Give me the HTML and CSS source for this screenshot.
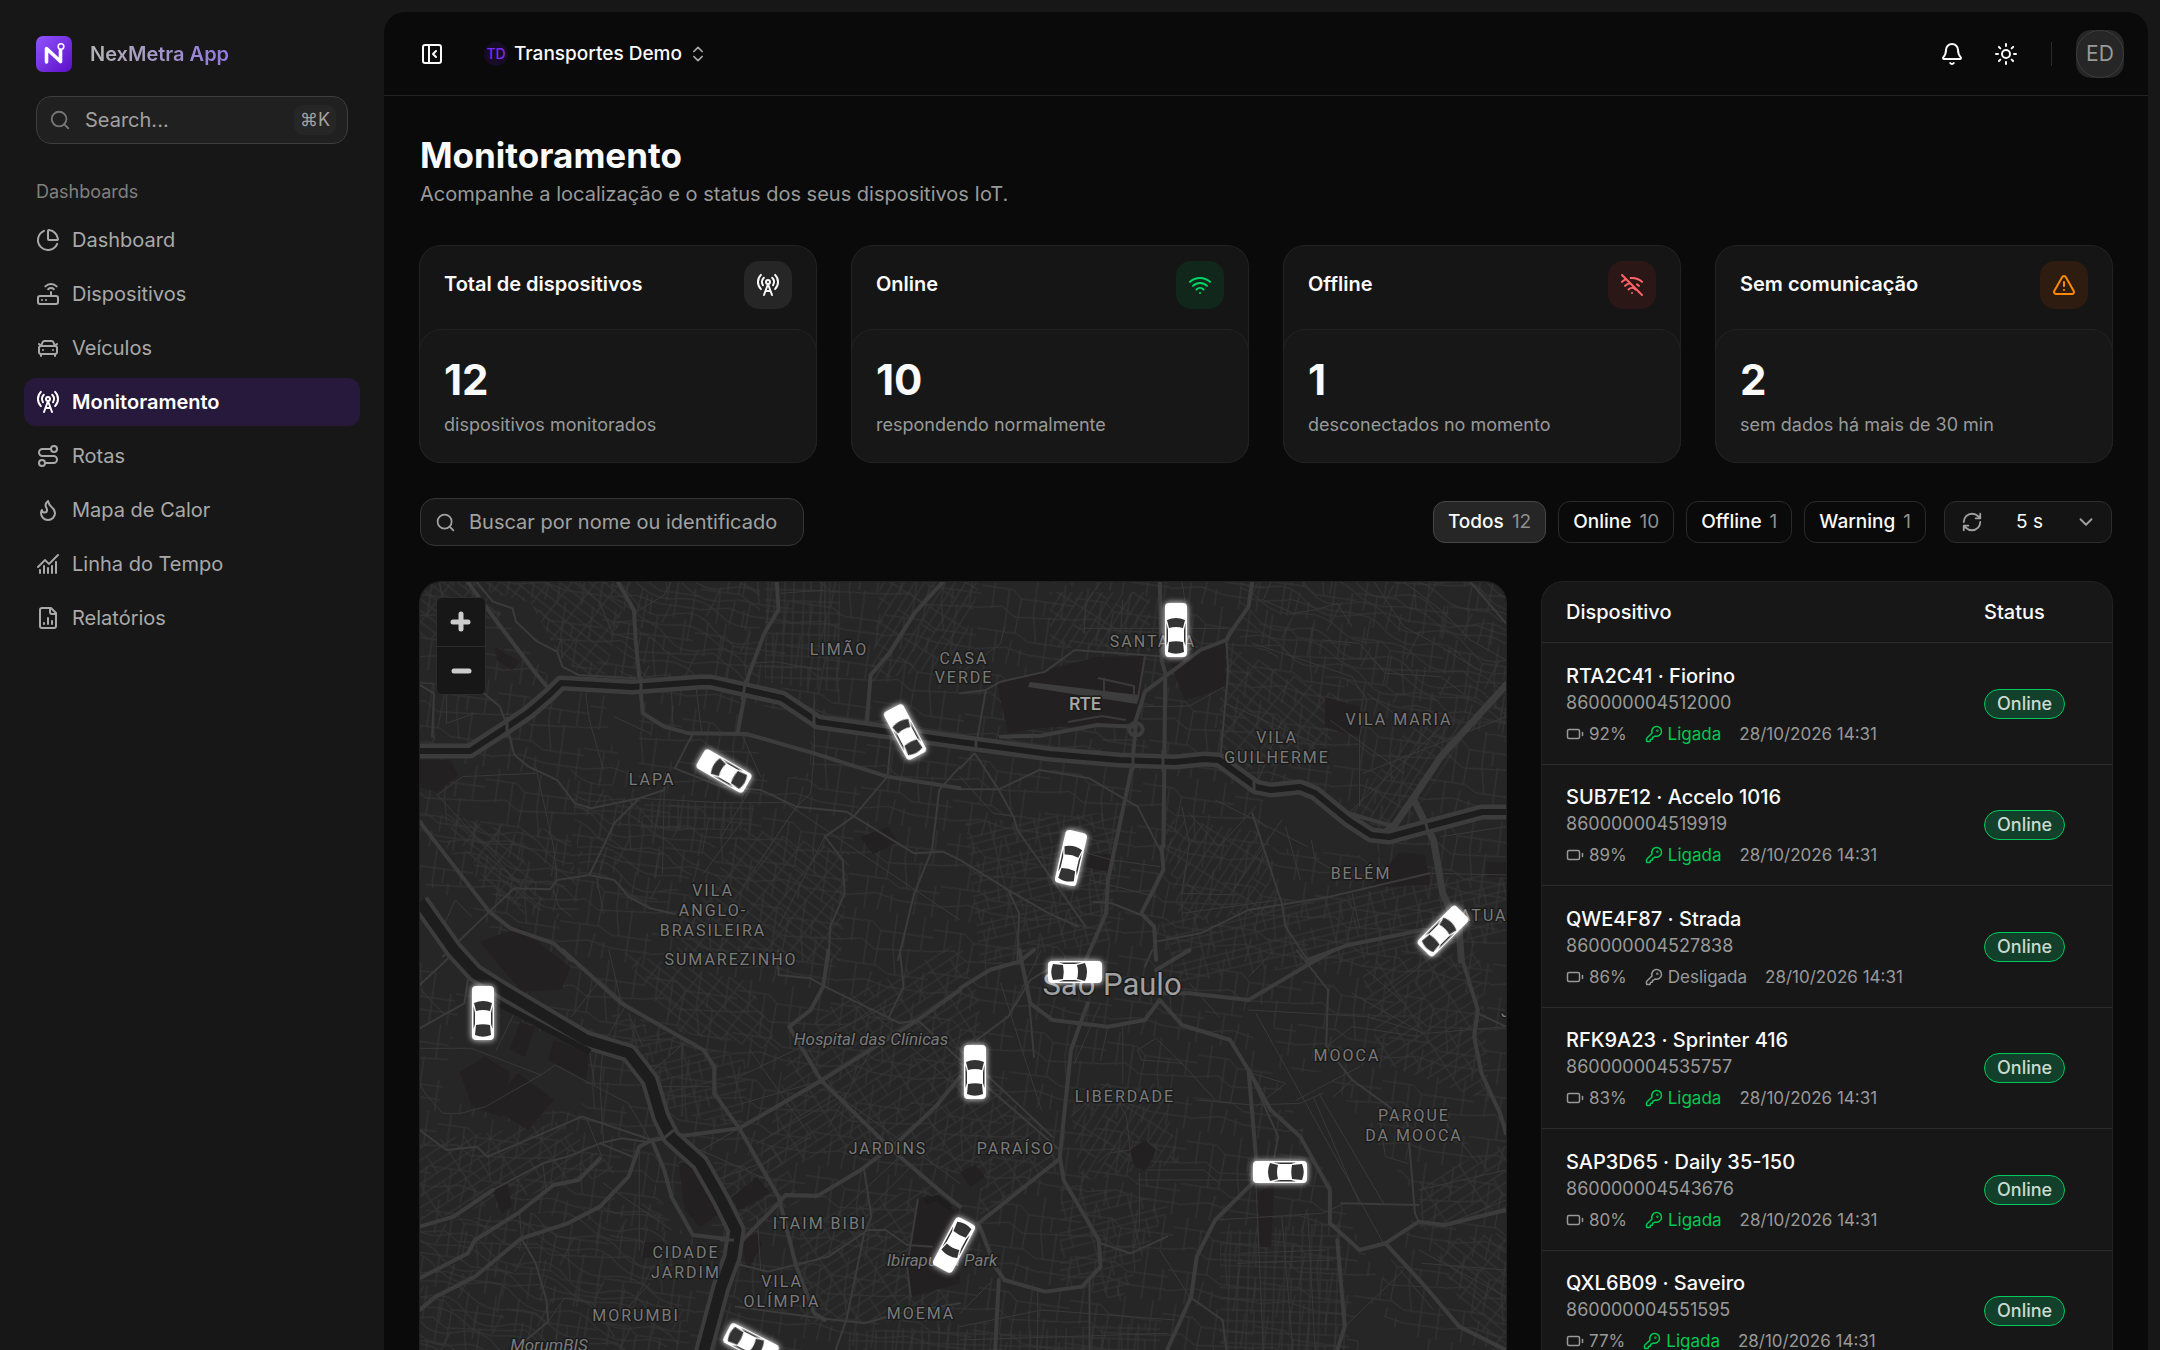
FILE: index.html
```
<!DOCTYPE html>
<html lang="pt-BR">
<head>
<meta charset="utf-8">
<meta name="viewport" content="width=device-width, initial-scale=1">
<title>Monitoramento · NexMetra App</title>
<link rel="stylesheet" href="styles.css">
</head>
<body>
<svg class="sprite" aria-hidden="true">
  <symbol id="i-search" viewBox="0 0 24 24"><circle cx="11" cy="11" r="8"/><path d="m21 21-4.3-4.3"/></symbol>
  <symbol id="i-pie" viewBox="0 0 24 24"><path d="M21 12c.55 0 1-.45.95-1a10 10 0 0 0-8.95-8.95c-.55-.05-1 .4-1 .95v8a1 1 0 0 0 1 1z"/><path d="M21.2 15.9A10 10 0 1 1 8 2.83"/></symbol>
  <symbol id="i-router" viewBox="0 0 24 24"><rect x="2" y="14" width="20" height="8" rx="2"/><path d="M6.01 18H6M10.01 18H10M15 10v4M17.84 7.17a4 4 0 0 0-5.66 0M20.66 4.34a8 8 0 0 0-11.31 0"/></symbol>
  <symbol id="i-car" viewBox="0 0 24 24"><path d="m21 8-2 2-1.5-3.7A2 2 0 0 0 15.65 5H8.4a2 2 0 0 0-1.9 1.26L5 10 3 8M7 14h.01M17 14h.01"/><rect x="3" y="10" width="18" height="8" rx="2"/><path d="M5 18v2M19 18v2"/></symbol>
  <symbol id="i-tower" viewBox="0 0 24 24"><path d="M4.9 16.1C1 12.2 1 5.8 4.9 1.9M7.8 4.7a6.14 6.14 0 0 0-.8 7.5"/><circle cx="12" cy="9" r="2"/><path d="M16.2 4.8c2 2 2.26 5.11.8 7.47M19.1 1.9a9.96 9.96 0 0 1 0 14.1M9.5 18h5M8 22l4-11 4 11"/></symbol>
  <symbol id="i-route" viewBox="0 0 24 24"><circle cx="6" cy="19" r="3"/><path d="M9 19h8.5a3.5 3.5 0 0 0 0-7h-11a3.5 3.5 0 0 1 0-7H15"/><circle cx="18" cy="5" r="3"/></symbol>
  <symbol id="i-flame" viewBox="0 0 24 24"><path d="M8.5 14.5A2.5 2.5 0 0 0 11 12c0-1.38-.5-2-1-3-1.07-2.14-.22-4.05 2-6 .5 2.5 2 4.9 4 6.5s3 3.5 3 5.5a7 7 0 1 1-14 0c0-1.15.43-2.29 1-3a2.5 2.5 0 0 0 2.5 2.5z"/></symbol>
  <symbol id="i-chart" viewBox="0 0 24 24"><path d="M12 16v5M16 14v7M20 10v11M22 3l-8.65 8.65a.5.5 0 0 1-.7 0L9.35 8.35a.5.5 0 0 0-.7 0L2 15M4 18v3M8 14v7"/></symbol>
  <symbol id="i-report" viewBox="0 0 24 24"><path d="M15 2H6a2 2 0 0 0-2 2v16a2 2 0 0 0 2 2h12a2 2 0 0 0 2-2V7z"/><path d="M14 2v4a2 2 0 0 0 2 2h4M8 18v-1M12 18v-6M16 18v-3"/></symbol>
  <symbol id="i-panel" viewBox="0 0 24 24"><rect x="3" y="3" width="18" height="18" rx="2"/><path d="M9 3v18M16 15l-3-3 3-3"/></symbol>
  <symbol id="i-updown" viewBox="0 0 24 24"><path d="m7 15 5 5 5-5M7 9l5-5 5 5"/></symbol>
  <symbol id="i-bell" viewBox="0 0 24 24"><path d="M10.27 21a2 2 0 0 0 3.46 0M3.26 15.33A1 1 0 0 0 4 17h16a1 1 0 0 0 .74-1.67C19.41 13.96 18 12.5 18 8A6 6 0 0 0 6 8c0 4.5-1.41 5.96-2.74 7.33"/></symbol>
  <symbol id="i-sun" viewBox="0 0 24 24"><circle cx="12" cy="12" r="4"/><path d="M12 2v2M12 20v2M4.93 4.93l1.41 1.41M17.66 17.66l1.41 1.41M2 12h2M20 12h2M6.34 17.66l-1.41 1.41M19.07 4.93l-1.41 1.41"/></symbol>
  <symbol id="i-wifi" viewBox="0 0 24 24"><path d="M12 20h.01M2 8.82a15 15 0 0 1 20 0M5 12.86a10 10 0 0 1 14 0M8.5 16.43a5 5 0 0 1 7 0"/></symbol>
  <symbol id="i-wifi-off" viewBox="0 0 24 24"><path d="M12 20h.01M8.5 16.43a5 5 0 0 1 7 0M5 12.86a10 10 0 0 1 5.17-2.69M19 12.86a10 10 0 0 0-2-1.52M2 8.82a15 15 0 0 1 4.18-2.64M22 8.82a15 15 0 0 0-11.29-3.76M2 2l20 20"/></symbol>
  <symbol id="i-warn" viewBox="0 0 24 24"><path d="m21.73 18-8-14a2 2 0 0 0-3.48 0l-8 14A2 2 0 0 0 4 21h16a2 2 0 0 0 1.73-3M12 9v4M12 17h.01"/></symbol>
  <symbol id="i-refresh" viewBox="0 0 24 24"><path d="M3 12a9 9 0 0 1 9-9 9.75 9.75 0 0 1 6.74 2.74L21 8M21 3v5h-5M21 12a9 9 0 0 1-9 9 9.75 9.75 0 0 1-6.74-2.74L3 16M8 16H3v5"/></symbol>
  <symbol id="i-down" viewBox="0 0 24 24"><path d="m6 9 6 6 6-6"/></symbol>
  <symbol id="i-battery" viewBox="0 0 24 24"><path d="M22 14v-4"/><rect x="2" y="6" width="16" height="12" rx="2"/></symbol>
  <symbol id="i-key" viewBox="0 0 24 24"><path d="M2.59 17.41A2 2 0 0 0 2 18.83V21a1 1 0 0 0 1 1h3a1 1 0 0 0 1-1v-1a1 1 0 0 1 1-1h1a1 1 0 0 0 1-1v-1a1 1 0 0 1 1-1h.17a2 2 0 0 0 1.42-.59l.81-.81a6.5 6.5 0 1 0-4-4z"/><circle cx="16.5" cy="7.5" r=".6"/></symbol>
  <symbol id="vehicle" viewBox="-16 -32 32 64" overflow="visible">
    <rect class="v-body" x="-11" y="-27" width="22" height="54" rx="4"/>
    <path class="v-glass" d="M-9-10Q0-14 9-10L7-2Q0-4-7-2ZM-7 12Q0 10.500 7 12L8 22Q0 25.500-8 22ZM-9.500-7l1.500 7v11l-1.500 5ZM9.500-7L8 0v11l1.500 5Z"/>
  </symbol>
</svg>

<div class="shell">
  <aside class="sidebar">
    <a class="brand" href="#">
      <svg class="brand-mark" viewBox="0 0 36 36" aria-hidden="true">
        <defs><linearGradient id="brandfill" x1="0" y1="0" x2="1" y2="1"><stop offset="0" stop-color="#9155ff"/><stop offset="1" stop-color="#5b0ec4"/></linearGradient></defs>
        <rect width="36" height="36" rx="7" fill="url(#brandfill)"/>
        <path d="M10.500 26V12.500L24.500 25.500V14" fill="none" stroke="#fff" stroke-width="3.600" stroke-linecap="round" stroke-linejoin="round"/>
        <circle cx="25" cy="10.500" r="2.800" fill="#7426e0" stroke="#fff" stroke-width="1.600"/>
      </svg>
      <span class="brand-name">NexMetra App</span>
    </a>
    <label class="quick-search">
      <svg class="icon"><use href="#i-search"/></svg>
      <input type="text" placeholder="Search..." aria-label="Search">
      <kbd>⌘K</kbd>
    </label>
    <p class="nav-title">Dashboards</p>
    <nav class="nav">
      <a href="#"><svg class="icon"><use href="#i-pie"/></svg>Dashboard</a>
      <a href="#"><svg class="icon"><use href="#i-router"/></svg>Dispositivos</a>
      <a href="#"><svg class="icon"><use href="#i-car"/></svg>Veículos</a>
      <a href="#" class="active" aria-current="page"><svg class="icon"><use href="#i-tower"/></svg>Monitoramento</a>
      <a href="#"><svg class="icon"><use href="#i-route"/></svg>Rotas</a>
      <a href="#"><svg class="icon"><use href="#i-flame"/></svg>Mapa de Calor</a>
      <a href="#"><svg class="icon"><use href="#i-chart"/></svg>Linha do Tempo</a>
      <a href="#"><svg class="icon"><use href="#i-report"/></svg>Relatórios</a>
    </nav>
  </aside>

  <div class="inset">
    <header class="topbar">
      <button class="icon-btn" type="button" aria-label="Recolher menu"><svg class="icon"><use href="#i-panel"/></svg></button>
      <button class="tenant" type="button">
        <span class="tenant-badge">TD</span>
        <span>Transportes Demo</span>
        <svg class="icon"><use href="#i-updown"/></svg>
      </button>
      <div class="topbar-actions">
        <button class="icon-btn" type="button" aria-label="Notificações"><svg class="icon"><use href="#i-bell"/></svg></button>
        <button class="icon-btn" type="button" aria-label="Tema"><svg class="icon"><use href="#i-sun"/></svg></button>
        <span class="divider"></span>
        <button class="avatar" type="button"><span>ED</span></button>
      </div>
    </header>

    <main class="content">
      <div class="heading">
        <h1>Monitoramento</h1>
        <p>Acompanhe a localização e o status dos seus dispositivos IoT.</p>
      </div>

      <section class="stats">
        <article class="stat">
          <div class="stat-head"><h2>Total de dispositivos</h2><span class="stat-icon"><svg class="icon"><use href="#i-tower"/></svg></span></div>
          <div class="stat-body"><strong>12</strong><p>dispositivos monitorados</p></div>
        </article>
        <article class="stat">
          <div class="stat-head"><h2>Online</h2><span class="stat-icon green"><svg class="icon"><use href="#i-wifi"/></svg></span></div>
          <div class="stat-body"><strong>10</strong><p>respondendo normalmente</p></div>
        </article>
        <article class="stat">
          <div class="stat-head"><h2>Offline</h2><span class="stat-icon red"><svg class="icon"><use href="#i-wifi-off"/></svg></span></div>
          <div class="stat-body"><strong>1</strong><p>desconectados no momento</p></div>
        </article>
        <article class="stat">
          <div class="stat-head"><h2>Sem comunicação</h2><span class="stat-icon orange"><svg class="icon"><use href="#i-warn"/></svg></span></div>
          <div class="stat-body"><strong>2</strong><p>sem dados há mais de 30 min</p></div>
        </article>
      </section>

      <div class="toolbar">
        <label class="search">
          <svg class="icon"><use href="#i-search"/></svg>
          <input type="text" placeholder="Buscar por nome ou identificado" aria-label="Buscar dispositivo">
        </label>
        <div class="filters">
          <button type="button" class="chip selected">Todos <span>12</span></button>
          <button type="button" class="chip">Online <span>10</span></button>
          <button type="button" class="chip">Offline <span>1</span></button>
          <button type="button" class="chip">Warning <span>1</span></button>
          <label class="interval">
            <svg class="icon"><use href="#i-refresh"/></svg>
            <select aria-label="Intervalo de atualização"><option>5 s</option><option>10 s</option><option>30 s</option></select>
            <svg class="icon"><use href="#i-down"/></svg>
          </label>
        </div>
      </div>

      <section class="board">
        <div class="map">
          <svg class="map-canvas" viewBox="0 0 1086 900" preserveAspectRatio="xMinYMin slice" role="img" aria-label="Mapa de São Paulo">
            <defs>
              <pattern id="p0" width="93" height="87" patternUnits="userSpaceOnUse" patternTransform="rotate(8)"><path d="M0 12h31l9 8h53M0 34l22-4 14 9 57-5M0 55h40l12 7h41M0 76l30-6 24 5h39M12 0v34M27 12v43M40 20l-2 35M54 0v34l6 28M70 34v53M82 0v34M20 55v32M36 62l-3 25M88 55v32M64 20v14M46 70v17"/></pattern>
              <pattern id="p1" width="42" height="30" patternUnits="userSpaceOnUse" patternTransform="rotate(-33)"><path d="M0 5h42M0 15h42M0 25h42M8 0v30M29 5v20"/></pattern>
              <pattern id="p2" width="38" height="27" patternUnits="userSpaceOnUse" patternTransform="rotate(38)"><path d="M0 4h38M0 13h38M0 22h38M6 0v27M25 0v27"/></pattern>
              <pattern id="p3" width="36" height="33" patternUnits="userSpaceOnUse" patternTransform="rotate(2)"><path d="M0 6h36M0 17h36M0 28h36M5 0v33M14 0v33M24 0v33M31 6v22"/></pattern>
              <pattern id="p4" width="40" height="26" patternUnits="userSpaceOnUse" patternTransform="rotate(-58)"><path d="M0 4h40M0 12h40M0 21h40M9 0v26M30 4v17"/></pattern>
              <pattern id="p5" width="84" height="66" patternUnits="userSpaceOnUse" patternTransform="rotate(20)"><path d="M0 8q20-12 40 2t44-2M0 20q22-10 42 0t42 0M0 34q18 12 40-2t44 2M0 46q24 10 44-2t40 2M0 58q20-8 40 2t44-2M14 0l5 30M33 34l-4 32M50 0l6 34M66 40l4 26M76 0l-3 22"/></pattern>
              <pattern id="p6" width="44" height="29" patternUnits="userSpaceOnUse" patternTransform="rotate(-14)"><path d="M0 4h44M0 11h44M0 20h44M10 0v29M33 0v20M22 11v18"/></pattern>
            </defs>
            <rect class="land" width="1086" height="900"/>
            <rect class="net" width="1086" height="900" fill="url(#p0)"/>

            <!-- street grids by neighbourhood -->
            <g class="blocks">
              <path fill="url(#p2)" d="M0 0H210L180 110 130 90 90 30 0 60Z"/>
              <path fill="url(#p5)" d="M190 0H340V100L200 95ZM0 230L150 250 160 340 90 330 0 240Z"/>
              <path fill="url(#p3)" d="M345 0H420V110L345 100ZM225 220L335 220 330 248 220 248Z"/>
              <path fill="url(#p4)" d="M460 0H560L540 80 450 100ZM630 10h100v60l-100-5Z"/>
              <path fill="url(#p5)" d="M820 0H1086V160L1000 130 940 110 820 60Z"/>
              <path fill="url(#p2)" d="M800 60L930 120 900 180 800 190Z"/>
              <path fill="url(#p4)" d="M985 150L1060 130 985 245 930 235Z"/>
              <path fill="url(#p2)" d="M325 245L430 270 420 380 250 380 290 300ZM20 230L90 250 130 330 80 320Z"/>
              <path fill="url(#p1)" d="M370 470L560 420 560 600 450 560 340 590ZM400 430L540 360 560 420 380 470Z"/>
              <path fill="url(#p6)" d="M545 240L700 230 690 360 560 380ZM740 340L1086 290 1086 360 760 400Z"/>
              <path fill="url(#p4)" d="M740 235L840 250 860 330 760 340Z"/>
              <path fill="url(#p1)" d="M265 600L360 560 380 620 330 640ZM0 560L140 540 200 590 0 640Z"/>
              <path fill="url(#p5)" d="M0 640L240 620 270 760 0 820ZM150 180L300 260 240 330 160 300Z"/>
              <path fill="url(#p1)" d="M380 640L520 600 530 740 380 740ZM560 480L640 580 560 640Z"/>
              <path fill="url(#p3)" d="M580 750L740 740 740 900 570 900ZM800 650L920 640 930 780 800 780Z"/>
              <path fill="url(#p3)" d="M430 750L570 740 560 900 400 900Z"/>
              <path fill="url(#p4)" d="M650 520L740 500 760 580 660 600Z"/>
              <path fill="url(#p1)" d="M1000 600L1086 560V630L1000 650ZM940 380L1060 370 1070 520 960 480Z"/>
              <path fill="url(#p2)" d="M1010 660L1086 650V780L1040 720ZM200 370L330 400 360 470 260 450Z"/>
              <path fill="url(#p6)" d="M190 430L330 480 320 550 230 520ZM640 600L750 620 700 720 640 700Z"/>
            </g>

            <!-- open areas without streets -->
            <path class="land" d="M65 10L110 20 140 75 170 100 140 110 110 70ZM185 112L220 112 218 200 190 160ZM318 115L390 140 390 190 350 200ZM0 300L60 330 100 400 60 420 0 380ZM40 420L170 470 160 530 20 520ZM860 490L905 490 1000 620 960 700 890 560 820 430 850 420ZM950 720L1086 860V900H1000L930 740ZM840 195L950 240 960 275 850 265ZM235 600L290 640 310 700 280 660 250 640Z"/>

            <!-- parks and closed grounds -->
            <g class="park">
              <path d="M577 101L677 75 723 74 719 141 629 145 588 151ZM750 80L805 60 806 105 765 118ZM666 271l28 2-5 17-24-5ZM905 115l35 10v30l-35-10ZM980 270l25 3 5 30-60 2Z"/>
              <path d="M0 178h30l8 15-20 17-18-5ZM75 65l25 15-8 8-15-10ZM440 255l28-10 10 15-25 12ZM60 360l40-15 30 25 20 15-8 22-40 3Z"/>
              <path d="M70 524L98 491 134 518 108 548ZM134 458L169 471 166 498 128 478ZM40 490l25-15 25 15-8 45-30-10ZM100 440l15 5-10 30-15-8ZM259 581L273 581 300 631 280 645 265 628Z"/>
              <path d="M312 615L337 595 350 611 318 629ZM72 607l15-8 5 25-10 8ZM225 660h20l-5 12-18 5ZM322 655l15-3 5 10-15 28Z"/>
              <path d="M498 618L508 613 535 628 540 701 491 715 487 685ZM838 611L854 601 851 665 840 665ZM710 568L725 558 736 568 725 590 714 583ZM540 590l15-7 10 12-15 10ZM1066 280h20v15h-20Z"/>
            </g>

            <g class="runway"><path d="M610 100L718 113 717 122 608 105Z"/><path d="M678 96l36 8v14M684 96v14M648 140l34-6 24 4"/></g>

            <!-- north-west sheet -->
            <g class="road" transform="matrix(.3571 0 0 .3333 -20 -22)">
              <g class="w2"><path d="M655 160L740 105 760 66M380 620L430 860 440 960M1160 400V580L1150 700 1110 740 960 980M670 715L900 728H1080M740 690L735 940M520 400L530 480 570 630M760 390L765 500M830 390L845 520M60 370H95V540M110 70L120 110M500 66L560 130 595 220 660 240M980 310L1050 305 1180 330M105 705L340 980M105 705L175 650 380 640M550 950L570 1060M430 990L445 1040 480 1070M960 530L1010 650M600 470L700 520M1190 66V250M1065 100L1190 90M440 275L450 240M130 400V490L210 460M850 940L960 780M1040 700L1568 1080M980 690L900 830M1190 830L1060 1100M1110 740L1010 900M125 1090L155 1020 200 1070"/></g>
              <g class="w3"><path d="M215 66L260 125 315 145 325 185 385 245 440 275 455 320 500 345 660 355M235 400L280 440 300 500 320 585 360 620 440 660 490 730 535 745 670 715 740 690M820 520L770 625 900 680 1010 690 1110 740 1250 755 1440 880 1520 875 1568 900M670 715L600 790 560 880 530 945M120 1190L250 1055 320 985 420 988 440 960 530 945 600 960 640 1010 700 1045 770 1062M1375 540L1365 650 1270 770 1190 830 1240 900 1245 1000 1205 1100 1200 1200M1568 620L1510 690 1490 870 1440 1000 1395 1200M740 690L745 640M55 375L95 400 90 530"/></g>
              <g class="w4"><path d="M190 66L240 140 380 340 415 385M610 66L655 150 660 240 680 460 740 500 810 520 970 522 1160 580 1365 650 1568 685M1055 66L1060 150 1020 220 975 350 945 520M1520 66L1440 160 1370 280 1318 345 1308 480M55 785L250 1055 310 1105 430 1150 480 1200"/></g>
            </g>

            <!-- north-east sheet -->
            <g class="road" transform="matrix(.3699 0 0 .3333 540 -22)">
              <g class="w2"><path d="M600 66L620 200M490 440L620 438 715 380M330 205H720M380 66L340 130 335 220M440 120L435 200M790 250L900 290 1060 350M840 66L820 120 900 160 960 150 1020 130 1060 200M1060 350L1100 420 1080 530V740M715 430L760 450 960 550M870 480L800 680M720 580L790 620M0 340L110 250 120 200M385 540H480M268 525V570M1100 400L1330 590M1000 480L1200 640M1040 770L1330 470M1090 640L1476 470M600 740L620 850 600 1000 750 1005M740 990L870 780M690 720L940 860M800 740L700 860 620 760M950 840L960 900 1060 960M880 800L920 960M600 1060L860 1020M1060 1000L1080 1100M1300 830L1476 800M1270 940L1476 945M345 880L410 900 540 920M350 960L530 1010M150 770L90 760 0 650M1120 66L1200 200 1300 260 1400 330M1200 66L1300 150 1380 240 1476 300M980 240L1080 250 1150 340 1300 350 1360 400"/></g>
              <g class="w3"><path d="M0 400L70 390 110 365 230 335 310 270 560 290 640 260M70 390L45 545M720 235L725 330 705 580M0 625L40 580 105 690 145 770 155 810 340 1100M0 688H105L215 630 350 655 480 740 550 890M0 900L130 990 240 1060 320 1100M130 990L160 1060 155 1200M360 1025L410 1030 490 1065M530 1145L650 1120 780 1050 1000 1010 1270 940M790 760L870 1030 880 1100 940 1200M500 290L480 420M1380 66L1476 190"/></g>
              <g class="w4"><path d="M540 66L545 300 555 340 550 860M790 66L780 140 730 220 720 240 650 270 500 395 470 500M110 530L220 527 370 495 475 500 465 620 400 960 395 1060 340 1200M545 860L550 930 490 1060 525 1100 530 1200M940 1200L1050 1155 1250 1110H1300M1050 760L1175 800M475 490A18 18 0 1 0 476 490"/></g>
              <g class="w6"><path d="M1476 375L1300 590 1225 715 1175 795 1140 825M1225 715L1280 840 1305 1000 1350 1110 1355 1200"/></g>
            </g>

            <!-- south-west sheet -->
            <g class="road" transform="matrix(.3571 0 0 .3333 -20 368)">
              <g class="w2"><path d="M630 170L570 280 560 400 570 580M585 0L620 160M640 190L680 290M710 360L800 275M415 1115L460 1045 540 1060 600 1160M55 295H200L395 375 435 345 540 405 640 460 700 570M435 260L530 300 545 405M395 375L240 470 170 490 120 490 70 430 55 400M320 190L270 300M60 120L120 190M520 500L565 620M340 865L335 790M400 640L410 730M670 600V900M780 640L950 535M840 600L1030 690M885 690L1010 640M730 410H870M790 290V500M950 380L1400 150M960 460L1180 392M980 300L1150 560 1090 600M1000 580L1250 430M1180 400L1568 700M1260 130L1568 420M1320 300L1200 530M1400 620L1220 800M1440 640L1310 780M1110 950L1230 900M1000 800L1010 960M700 1000L640 1070M570 700L760 840M640 170L560 90 480 200"/></g>
              <g class="w3"><path d="M55 540L130 600 215 590 245 620 510 500 705 570M260 720L400 640 470 620 560 580 620 565 690 575M1060 0V75L1150 85 1190 110 1400 220 1450 210M1450 210L1568 330M1300 660L1320 800 1300 850 1250 1110 1220 1200M900 930L1030 965 1200 920 1310 840 1360 840 1420 885 1490 890M940 1070L1180 1105 1300 1120 1400 1090 1568 1060M340 865L380 940 410 1050 415 1115 320 1200M55 235L180 160 190 90M55 105L160 0M1400 0L1410 110 1370 200M560 580L650 620M1450 750L1420 950 1430 1040"/></g>
              <g class="w4"><path d="M455 0L620 160 800 270 850 300 880 350V430L950 535 1060 740 1110 950 1160 1090 1190 1110M705 570L950 535 1180 392 1450 210 1568 120M55 830L150 800 260 720M55 985L190 910 210 870 330 790 430 705 500 690 560 625M55 1080L100 1040 210 980 340 865 470 820 560 770 640 680 670 590 705 570 740 660 760 740 820 855 940 870H960L1060 760 1080 735 1170 737 1290 660 1400 570 1500 470 1568 380M1200 0L1185 110 1150 180 1090 230 1180 392 1340 560 1400 620 1520 730 1568 770"/></g>
            </g>

            <!-- south-east sheet -->
            <g class="road" transform="matrix(.3699 0 0 .3333 540 368)">
              <g class="w2"><path d="M800 190L1145 880M970 430L1145 760M955 440L1080 760M780 180L1100 200 1260 250 1476 230M640 450L790 465 920 460 980 430M690 810L980 790 1040 760M800 700L820 1200M0 1090L80 1000M380 160L310 340M220 0L130 200M110 100L220 480M480 300L530 265 600 340 690 450M480 300L490 330 600 340M790 370L880 400 800 470M910 450L1080 350M1010 440L1060 390M505 660H660L700 700M480 690H800M485 670V830L470 890M300 500L400 400 450 500 460 600M370 640L400 610 460 600M0 1170L560 1150M0 1130L220 1080 580 1110M210 1020V1200M540 900L620 1040M750 940L1010 930M760 910L990 900M870 800L900 1200M940 790L960 1200M1040 1130L1200 960M1190 960L1280 1080M1250 940L1476 960M1240 900L1476 1040M1300 830L1476 750M1240 720L1476 660M1130 470L1150 620 1210 640M1300 500L1400 640M1060 130L1250 250M1150 130L1300 0M1100 60L1200 160M620 100L700 200M850 0L780 80M990 290L1060 230 1240 260M380 330L400 230M440 230L440 400"/></g>
              <g class="w3"><path d="M45 270L130 200 190 90 250 50M0 340L270 600M0 300L250 560M910 0L995 120 990 290 1060 390 1160 470 1210 520 1230 790 1240 815M1400 190L1476 230M350 990V1200M1030 760L1240 765M780 360L860 560 850 620M380 880L460 910 560 860M620 1040L710 1110 720 1200M185 130L200 320M500 50L520 0"/></g>
              <g class="w4"><path d="M0 115L80 60 160 35 200 0M500 130H620L780 150 940 45 1010 0M120 990L95 950 50 820 265 630M530 60L620 0"/></g>
              <g class="w5"><path d="M160 0L190 160 250 210 400 230 500 210 540 150 600 225 730 270 780 360 840 480 920 560 1000 720V820L1080 900 1150 880 1240 815 1310 825 1476 780M780 360L800 620 790 700 690 810 640 920 625 1040 560 1200M345 160L300 300 270 620 280 690 375 870 380 950 330 1010 230 1025 120 990M105 990L95 1200M1350 0L1400 180 1390 260 1410 370 1460 490 1476 550M1020 870L1040 1130 1020 1200M1150 880L1250 1000 1350 1130 1476 1200"/></g>
            </g>

            <!-- rivers with the expressways on both banks -->
            <g class="river">
              <path d="M0 169H50L87 145 109 130 130 112 141 101 212 105 280 100H291L362 116 398 140 540 160 629 172 699 178 755 180 784 177 799 178 836 205 851 208 880 205 895 211 928 238 951 253 969 255 1002 246 1062 230H1086"/>
              <path class="wide" d="M0 320L34 368 55 391 87 411 166 458 209 471 230 498 241 535 251 555 280 581 301 618 316 648 312 675 301 705 284 768 270 900"/>
            </g>
            <g class="water">
              <path d="M0 169H50L87 145 109 130 130 112 141 101 212 105 280 100H291L362 116 398 140 540 160 629 172 699 178 755 180 784 177 799 178 836 205 851 208 880 205 895 211 928 238 951 253 969 255 1002 246 1062 230H1086"/>
              <path class="wide" d="M0 320L34 368 55 391 87 411 166 458 209 471 230 498 241 535 251 555 280 581 301 618 316 648 312 675 301 705 284 768 270 900"/>
              <path d="M80 422L170 470M505 620l12-4 14 10"/>
            </g>
            <g class="bridge"><path d="M221 95v16M87 135v20M326 98l-4 20M394 130v16M556 155v14M713 168v20M743 168v22M834 195v14M1005 238l4 16M254 548l-10 8M314 658h-14"/></g>

            <g class="labels">
              <text x="419" y="73">LIMÃO</text>
              <text x="544" y="82">CASA</text><text x="544" y="101">VERDE</text>
              <text x="733" y="65">SANTANA</text>
              <text class="code" x="665" y="128">RTE</text>
              <text x="979" y="143">VILA MARIA</text>
              <text x="857" y="161">VILA</text><text x="857" y="181">GUILHERME</text>
              <text x="232" y="203">LAPA</text>
              <text x="293" y="314">VILA</text><text x="293" y="334">ANGLO-</text><text x="293" y="354">BRASILEIRA</text>
              <text x="311" y="383">SUMAREZINHO</text>
              <text x="941" y="297">BELÉM</text>
              <text class="start" x="1029" y="339">TATUAPÉ</text>
              <text class="start" x="1081" y="435">J</text>
              <text class="city" x="692" y="413">São Paulo</text>
              <text class="poi" x="451" y="463">Hospital das Clínicas</text>
              <text x="468" y="572">JARDINS</text>
              <text x="596" y="572">PARAÍSO</text>
              <text x="705" y="520">LIBERDADE</text>
              <text x="927" y="479">MOOCA</text>
              <text x="994" y="539">PARQUE</text><text x="994" y="559">DA MOOCA</text>
              <text x="400" y="647">ITAIM BIBI</text>
              <text x="266" y="676">CIDADE</text><text x="266" y="696">JARDIM</text>
              <text x="362" y="705">VILA</text><text x="362" y="725">OLÍMPIA</text>
              <text x="216" y="739">MORUMBI</text>
              <text x="501" y="737">MOEMA</text>
              <text class="poi" x="522" y="684">Ibirapuera Park</text>
              <text class="poi" x="129" y="769">MorumBIS</text>
            </g>

            <g class="vehicles">
              <use href="#vehicle" x="-16" y="-32" width="32" height="64" transform="translate(756 48)"/>
              <use href="#vehicle" x="-16" y="-32" width="32" height="64" transform="translate(485 150) rotate(-28)"/>
              <use href="#vehicle" x="-16" y="-32" width="32" height="64" transform="translate(304 189) rotate(-60)"/>
              <use href="#vehicle" x="-16" y="-32" width="32" height="64" transform="translate(651 276) rotate(13)"/>
              <use href="#vehicle" x="-16" y="-32" width="32" height="64" transform="translate(1023 349) rotate(45)"/>
              <use href="#vehicle" x="-16" y="-32" width="32" height="64" transform="translate(655 390) rotate(90)"/>
              <use href="#vehicle" x="-16" y="-32" width="32" height="64" transform="translate(555 490)"/>
              <use href="#vehicle" x="-16" y="-32" width="32" height="64" transform="translate(63 431)"/>
              <use href="#vehicle" x="-16" y="-32" width="32" height="64" transform="translate(860 590) rotate(-90)"/>
              <use href="#vehicle" x="-16" y="-32" width="32" height="64" transform="translate(534 663) rotate(208)"/>
              <use href="#vehicle" x="-16" y="-32" width="32" height="64" transform="translate(331 762) rotate(117)"/>
            </g>
          </svg>
          <div class="zoom">
            <button type="button" aria-label="Aproximar"><svg viewBox="0 0 48 48"><path d="M16 24h15M24 16v15"/></svg></button>
            <button type="button" aria-label="Afastar"><svg viewBox="0 0 48 48"><path d="M17 24h15"/></svg></button>
          </div>
        </div>

        <div class="devices">
          <table>
            <thead><tr><th scope="col">Dispositivo</th><th scope="col" class="status-col">Status</th></tr></thead>
            <tbody>
              <tr>
                <td><div class="name">RTA2C41 · Fiorino</div><div class="serial">860000004512000</div>
                  <div class="meta"><span><svg class="icon"><use href="#i-battery"/></svg>92%</span><span class="on"><svg class="icon"><use href="#i-key"/></svg>Ligada</span><time>28/10/2026 14:31</time></div></td>
                <td><span class="badge">Online</span></td>
              </tr>
              <tr>
                <td><div class="name">SUB7E12 · Accelo 1016</div><div class="serial">860000004519919</div>
                  <div class="meta"><span><svg class="icon"><use href="#i-battery"/></svg>89%</span><span class="on"><svg class="icon"><use href="#i-key"/></svg>Ligada</span><time>28/10/2026 14:31</time></div></td>
                <td><span class="badge">Online</span></td>
              </tr>
              <tr>
                <td><div class="name">QWE4F87 · Strada</div><div class="serial">860000004527838</div>
                  <div class="meta"><span><svg class="icon"><use href="#i-battery"/></svg>86%</span><span><svg class="icon"><use href="#i-key"/></svg>Desligada</span><time>28/10/2026 14:31</time></div></td>
                <td><span class="badge">Online</span></td>
              </tr>
              <tr>
                <td><div class="name">RFK9A23 · Sprinter 416</div><div class="serial">860000004535757</div>
                  <div class="meta"><span><svg class="icon"><use href="#i-battery"/></svg>83%</span><span class="on"><svg class="icon"><use href="#i-key"/></svg>Ligada</span><time>28/10/2026 14:31</time></div></td>
                <td><span class="badge">Online</span></td>
              </tr>
              <tr>
                <td><div class="name">SAP3D65 · Daily 35-150</div><div class="serial">860000004543676</div>
                  <div class="meta"><span><svg class="icon"><use href="#i-battery"/></svg>80%</span><span class="on"><svg class="icon"><use href="#i-key"/></svg>Ligada</span><time>28/10/2026 14:31</time></div></td>
                <td><span class="badge">Online</span></td>
              </tr>
              <tr>
                <td><div class="name">QXL6B09 · Saveiro</div><div class="serial">860000004551595</div>
                  <div class="meta"><span><svg class="icon"><use href="#i-battery"/></svg>77%</span><span class="on"><svg class="icon"><use href="#i-key"/></svg>Ligada</span><time>28/10/2026 14:31</time></div></td>
                <td><span class="badge">Online</span></td>
              </tr>
            </tbody>
          </table>
        </div>
      </section>
    </main>
  </div>
</div>
</body>
</html>
```
FILE: styles.css
```
:root {
  --bg: #0a0a0a;
  --surface: #171717;
  --raised: #262626;
  --line: #222;
  --line-strong: #363636;
  --text: #fafafa;
  --muted: #a1a1a1;
  --radius: 12px;
  --radius-lg: 21px;
}

* { box-sizing: border-box; }

body {
  margin: 0;
  height: 100vh;
  overflow: hidden;
  background: var(--surface);
  color: var(--text);
  font-family: Inter, "Liberation Sans", sans-serif;
  font-size: 20px;
  line-height: 30px;
}

h1, h2, p { margin: 0; }
a { color: inherit; text-decoration: none; }
button, input, select { font: inherit; color: inherit; }
button { border: 0; padding: 0; background: none; cursor: pointer; }

input {
  border: 0;
  padding: 0;
  outline: 0;
  background: none;
  min-width: 0;
}
input::placeholder { color: var(--muted); opacity: 1; }

.sprite { position: absolute; width: 0; height: 0; }

.icon {
  width: 24px;
  height: 24px;
  flex: none;
  fill: none;
  stroke: currentColor;
  stroke-width: 2;
  stroke-linecap: round;
  stroke-linejoin: round;
}

/* shell */
.shell {
  display: grid;
  grid-template-columns: 384px minmax(0, 1fr);
  height: 100%;
}

.sidebar {
  display: flex;
  flex-direction: column;
  padding: 36px 24px;
}

.brand {
  display: flex;
  align-items: center;
  gap: 18px;
  padding: 0 12px;
}
.brand-mark { width: 36px; height: 36px; }
.brand-name {
  font-weight: 600;
  background: linear-gradient(90deg, #b4b4b4, #9278df);
  background-clip: text;
  -webkit-background-clip: text;
  color: transparent;
}

.quick-search {
  display: flex;
  align-items: center;
  gap: 14px;
  height: 48px;
  margin: 24px 12px 0;
  padding: 0 11px 0 12px;
  border: 1px solid #3d3d3d;
  border-radius: 15px;
  background: #202020;
}
.quick-search .icon { width: 22px; height: 22px; color: #767676; }
.quick-search input { flex: 1; }
.quick-search kbd {
  height: 30px;
  padding: 0 6px;
  border-radius: 9px;
  background: var(--raised);
  color: var(--muted);
  font: 400 18px/30px Inter, sans-serif;
}

.nav-title {
  margin: 36px 12px 12px;
  color: #808080;
  font-size: 18px;
  line-height: 24px;
}

.nav { display: flex; flex-direction: column; gap: 6px; }
.nav a {
  display: flex;
  align-items: center;
  gap: 12px;
  height: 48px;
  padding: 0 12px;
  border-radius: var(--radius);
  color: #a9a9a9;
}
.nav a.active { background: #27193c; color: #fff; font-weight: 600; }

.inset {
  margin: 12px 12px 0 0;
  border-radius: var(--radius-lg) var(--radius-lg) 0 0;
  background: var(--bg);
  overflow: hidden;
}

/* top bar */
.topbar {
  display: flex;
  align-items: center;
  height: 84px;
  padding: 0 24px 0 30px;
  border-bottom: 1px solid var(--line);
}
.icon-btn { display: grid; place-items: center; width: 36px; height: 48px; }
.tenant {
  display: flex;
  align-items: center;
  gap: 6px;
  margin-left: 34px;
  font-size: 19px;
  font-weight: 500;
}
.tenant .icon { width: 20px; height: 20px; color: #a9a9a9; }
.tenant-badge {
  width: 24px;
  border-radius: 50%;
  background: #170b27;
  color: #7c2bf0;
  font-size: 14px;
  line-height: 24px;
  text-align: center;
}
.topbar-actions { display: flex; align-items: center; gap: 18px; margin-left: auto; }
.divider { width: 1px; height: 24px; margin: 0 6px 0 9px; background: #2b2b2b; }
.avatar {
  width: 48px;
  height: 48px;
  border-radius: 15px;
  background: var(--raised);
}
.avatar span {
  display: block;
  border: 1px solid #3c3c3c;
  border-radius: 50%;
  color: #999;
  font-size: 21px;
  line-height: 46px;
}

/* page */
.content { display: flex; flex-direction: column; gap: 36px; padding: 36px; }
.heading h1 { font-size: 35px; line-height: 47px; font-weight: 700; }
.heading p { color: #999; line-height: 31px; }

.stats { display: grid; grid-template-columns: repeat(4, minmax(0, 1fr)); gap: 36px; }
.stat {
  border-radius: var(--radius-lg);
  background: #151515;
  box-shadow: 0 0 0 1px var(--line);
}
.stat-head { display: flex; justify-content: space-between; padding: 15px 24px 21px; }
.stat-head h2 { font-size: 20px; line-height: 46px; font-weight: 600; }
.stat-icon {
  display: grid;
  place-items: center;
  width: 48px;
  height: 48px;
  border-radius: 15px;
  background: var(--raised);
}
.stat-icon.green { background: #11271b; color: #00d366; }
.stat-icon.red { background: #2c1717; color: #ff6467; }
.stat-icon.orange { background: #2e1c11; color: #ff8904; }
.stat-body {
  padding: 24px 24px 24px;
  border-radius: var(--radius-lg);
  background: var(--surface);
  box-shadow: 0 0 0 1px var(--line);
}
.stat-body strong { display: block; font-size: 42px; line-height: 52px; font-weight: 700; }
.stat-body p { margin-top: 5px; color: #999; font-size: 18px; line-height: 27px; }

.toolbar { display: flex; align-items: center; justify-content: space-between; gap: 24px; }
.search {
  display: flex;
  align-items: center;
  gap: 13px;
  width: 384px;
  height: 48px;
  padding: 0 14px;
  border: 1px solid var(--line-strong);
  border-radius: 15px;
  background: #161616;
}
.search .icon { width: 21px; height: 21px; color: var(--muted); }
.search input { flex: 1; }

.filters { display: flex; align-items: center; gap: 12px; }
.chip {
  height: 42px;
  padding: 0 14px;
  border: 1px solid #2b2b2b;
  border-radius: var(--radius);
  font-size: 19px;
  font-weight: 500;
}
.chip span { margin-left: 3px; color: #8f8f8f; font-weight: 400; }
.chip.selected { border-color: #464646; background: #262626; }
.interval {
  display: flex;
  align-items: center;
  width: 168px;
  height: 42px;
  margin-left: 6px;
  padding: 0 14px 0 16px;
  border: 1px solid #2e2e2e;
  border-radius: var(--radius);
  background: #141414;
  color: var(--muted);
}
.interval .icon { width: 22px; height: 22px; }
.interval select {
  flex: 1;
  min-width: 0;
  border: 0;
  padding: 0 0 0 33px;
  appearance: none;
  background: none;
  color: var(--text);
  font-size: 19px;
}

/* map and list */
.board { display: grid; grid-template-columns: minmax(0, 1fr) 570px; gap: 36px; align-items: start; }
.map {
  position: relative;
  height: 900px;
  border-radius: var(--radius-lg);
  overflow: hidden;
  box-shadow: 0 0 0 1px var(--line);
}
.map-canvas { display: block; width: 100%; height: 100%; }
.land { fill: #262626; }
.map-canvas pattern path { fill: none; stroke: #353535; stroke-width: 1; }
.blocks path { stroke: none; }
.park { fill: #232021; }
.runway { fill: #3d3d3d; }
.runway path + path { fill: none; stroke: #3a3a3a; stroke-width: 2; }
.road path {
  fill: none;
  stroke: #3c3c3c;
  stroke-linejoin: round;
  stroke-linecap: round;
  vector-effect: non-scaling-stroke;
}
.road .w2 path { stroke: #393939; stroke-width: 1px; }
.road .w3 path { stroke: #3b3b3b; stroke-width: 2px; }
.road .w4 path { stroke-width: 4px; }
.road .w5 path { stroke-width: 4px; }
.road .w6 path { stroke-width: 7px; }
.river path { fill: none; stroke: #3c3c3c; stroke-width: 15; stroke-linejoin: round; }
.river .wide { stroke-width: 19; }
.water path { fill: none; stroke: #1d1d1d; stroke-width: 6; stroke-linejoin: round; }
.water .wide { stroke-width: 11; }
.bridge path { fill: none; stroke: #3c3c3c; stroke-width: 3; }

.labels text {
  fill: #7a7a7a;
  stroke: #1b1b1b;
  stroke-width: 3px;
  stroke-linejoin: round;
  paint-order: stroke;
  text-anchor: middle;
  font-family: Roboto, "Liberation Sans", sans-serif;
  font-size: 16px;
  letter-spacing: 2px;
}
.labels .start { text-anchor: start; }
.labels .code { fill: #a8a8a8; font-size: 18px; font-weight: 500; letter-spacing: 0; }
.labels .city { fill: #a0a0a0; font-size: 31px; letter-spacing: 0; }
.labels .poi { font-size: 17px; font-style: italic; letter-spacing: 0; }

.vehicles { filter: drop-shadow(0 0 3px #fff); }
.v-body { fill: #fff; }
.v-glass { fill: #333; }

.zoom {
  position: absolute;
  top: 15px;
  left: 16px;
  display: flex;
  flex-direction: column;
  border: 1px solid #2c2c2c;
  border-radius: 6px;
  background: var(--surface);
  overflow: hidden;
}
.zoom button { width: 48px; height: 48px; }
.zoom button + button { border-top: 1px solid #2c2c2c; }
.zoom svg { display: block; stroke: #ccc; stroke-width: 5; stroke-linecap: round; }

.devices {
  height: 900px;
  border-radius: var(--radius-lg);
  background: var(--surface);
  box-shadow: 0 0 0 1px var(--line);
  overflow: hidden;
}
.devices table { width: 100%; border-collapse: collapse; }
.devices th {
  height: 60px;
  padding: 1px 12px 0 24px;
  border-bottom: 1px solid #2b2b2b;
  font-weight: 500;
  text-align: left;
}
.devices .status-col { width: 140px; padding-left: 12px; }
.devices td {
  height: 122px;
  padding: 0 12px 0 24px;
  border-bottom: 1px solid #2b2b2b;
}
.devices tr:nth-child(even) td { height: 121px; }
.devices td + td { padding-left: 12px; }
.name { padding-top: 3px; font-weight: 500; line-height: 28px; }
.serial { color: #999; font-size: 18px; line-height: 26px; }
.meta {
  display: flex;
  gap: 18px;
  margin-top: 4px;
  color: #999;
  font-size: 17px;
  line-height: 28px;
}
.meta span { display: flex; align-items: center; gap: 5px; }
.meta .icon { width: 18px; height: 18px; }
.meta .on { color: #00c951; }
.badge {
  display: inline-block;
  height: 30px;
  padding: 0 12px;
  border: 1px solid #00c95f;
  border-radius: 15px;
  background: #13402a;
  color: #cbdad1;
  font-size: 18px;
  font-weight: 500;
  line-height: 27px;
}
```
